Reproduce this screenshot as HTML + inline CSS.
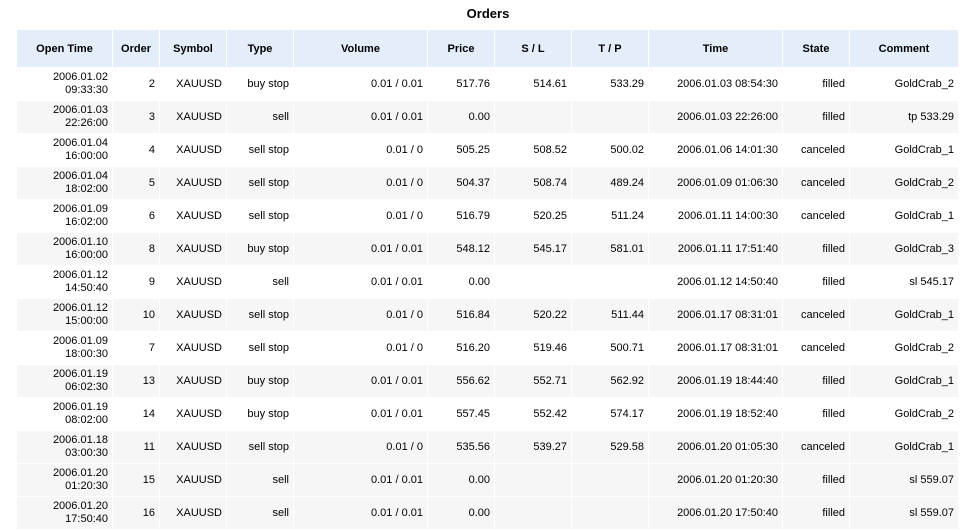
<!DOCTYPE html>
<html><head><meta charset="utf-8"><style>
body{margin:0;background:#fff;font-family:"Liberation Sans",Tahoma,sans-serif;font-size:11px;color:#000;}
h1{margin:0;position:absolute;top:6px;left:0;width:976px;text-align:center;font-size:13px;font-weight:bold;}
table{position:absolute;left:16px;top:29px;border-collapse:collapse;table-layout:fixed;width:942px;}
td,th{border:1px solid #fff;padding:0 4px;text-align:right;line-height:13px;overflow:hidden;white-space:nowrap;}
th{background:#e4eefb;height:35px;text-align:center;font-weight:bold;padding-top:2px;}
td{height:32px;}
tr.g td{background:#f6f6f6;}
</style></head><body>
<h1>Orders</h1>
<table>
<colgroup><col style="width:96px"><col style="width:47px"><col style="width:67px"><col style="width:67px"><col style="width:134px"><col style="width:67px"><col style="width:77px"><col style="width:77px"><col style="width:134px"><col style="width:67px"><col style="width:109px"></colgroup>
<tr><th>Open Time</th><th>Order</th><th>Symbol</th><th>Type</th><th>Volume</th><th>Price</th><th>S / L</th><th>T / P</th><th>Time</th><th>State</th><th>Comment</th></tr>
<tr><td>2006.01.02<br>09:33:30</td><td>2</td><td>XAUUSD</td><td>buy stop</td><td>0.01 / 0.01</td><td>517.76</td><td>514.61</td><td>533.29</td><td>2006.01.03 08:54:30</td><td>filled</td><td>GoldCrab_2</td></tr>
<tr class="g"><td>2006.01.03<br>22:26:00</td><td>3</td><td>XAUUSD</td><td>sell</td><td>0.01 / 0.01</td><td>0.00</td><td></td><td></td><td>2006.01.03 22:26:00</td><td>filled</td><td>tp 533.29</td></tr>
<tr><td>2006.01.04<br>16:00:00</td><td>4</td><td>XAUUSD</td><td>sell stop</td><td>0.01 / 0</td><td>505.25</td><td>508.52</td><td>500.02</td><td>2006.01.06 14:01:30</td><td>canceled</td><td>GoldCrab_1</td></tr>
<tr class="g"><td>2006.01.04<br>18:02:00</td><td>5</td><td>XAUUSD</td><td>sell stop</td><td>0.01 / 0</td><td>504.37</td><td>508.74</td><td>489.24</td><td>2006.01.09 01:06:30</td><td>canceled</td><td>GoldCrab_2</td></tr>
<tr><td>2006.01.09<br>16:02:00</td><td>6</td><td>XAUUSD</td><td>sell stop</td><td>0.01 / 0</td><td>516.79</td><td>520.25</td><td>511.24</td><td>2006.01.11 14:00:30</td><td>canceled</td><td>GoldCrab_1</td></tr>
<tr class="g"><td>2006.01.10<br>16:00:00</td><td>8</td><td>XAUUSD</td><td>buy stop</td><td>0.01 / 0.01</td><td>548.12</td><td>545.17</td><td>581.01</td><td>2006.01.11 17:51:40</td><td>filled</td><td>GoldCrab_3</td></tr>
<tr><td>2006.01.12<br>14:50:40</td><td>9</td><td>XAUUSD</td><td>sell</td><td>0.01 / 0.01</td><td>0.00</td><td></td><td></td><td>2006.01.12 14:50:40</td><td>filled</td><td>sl 545.17</td></tr>
<tr class="g"><td>2006.01.12<br>15:00:00</td><td>10</td><td>XAUUSD</td><td>sell stop</td><td>0.01 / 0</td><td>516.84</td><td>520.22</td><td>511.44</td><td>2006.01.17 08:31:01</td><td>canceled</td><td>GoldCrab_1</td></tr>
<tr><td>2006.01.09<br>18:00:30</td><td>7</td><td>XAUUSD</td><td>sell stop</td><td>0.01 / 0</td><td>516.20</td><td>519.46</td><td>500.71</td><td>2006.01.17 08:31:01</td><td>canceled</td><td>GoldCrab_2</td></tr>
<tr class="g"><td>2006.01.19<br>06:02:30</td><td>13</td><td>XAUUSD</td><td>buy stop</td><td>0.01 / 0.01</td><td>556.62</td><td>552.71</td><td>562.92</td><td>2006.01.19 18:44:40</td><td>filled</td><td>GoldCrab_1</td></tr>
<tr><td>2006.01.19<br>08:02:00</td><td>14</td><td>XAUUSD</td><td>buy stop</td><td>0.01 / 0.01</td><td>557.45</td><td>552.42</td><td>574.17</td><td>2006.01.19 18:52:40</td><td>filled</td><td>GoldCrab_2</td></tr>
<tr class="g"><td>2006.01.18<br>03:00:30</td><td>11</td><td>XAUUSD</td><td>sell stop</td><td>0.01 / 0</td><td>535.56</td><td>539.27</td><td>529.58</td><td>2006.01.20 01:05:30</td><td>canceled</td><td>GoldCrab_1</td></tr>
<tr class="g"><td>2006.01.20<br>01:20:30</td><td>15</td><td>XAUUSD</td><td>sell</td><td>0.01 / 0.01</td><td>0.00</td><td></td><td></td><td>2006.01.20 01:20:30</td><td>filled</td><td>sl 559.07</td></tr>
<tr class="g"><td>2006.01.20<br>17:50:40</td><td>16</td><td>XAUUSD</td><td>sell</td><td>0.01 / 0.01</td><td>0.00</td><td></td><td></td><td>2006.01.20 17:50:40</td><td>filled</td><td>sl 559.07</td></tr>
</table>
</body></html>
